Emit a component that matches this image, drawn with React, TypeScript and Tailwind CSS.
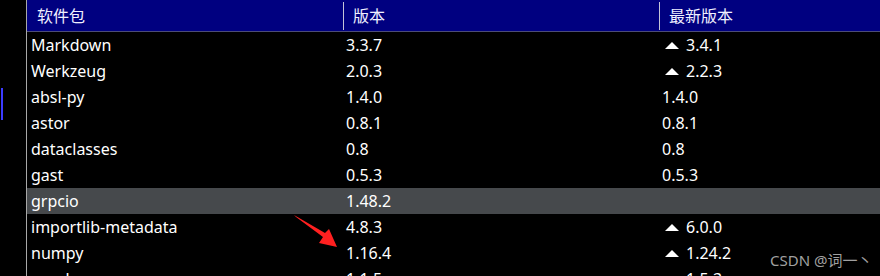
import React from 'react';

type Pkg = {
  name: string;
  version: string;
  latest: string;
  upgrade?: boolean;
};

const packages: Pkg[] = [
  { name: 'Markdown', version: '3.3.7', latest: '3.4.1', upgrade: true },
  { name: 'Werkzeug', version: '2.0.3', latest: '2.2.3', upgrade: true },
  { name: 'absl-py', version: '1.4.0', latest: '1.4.0' },
  { name: 'astor', version: '0.8.1', latest: '0.8.1' },
  { name: 'dataclasses', version: '0.8', latest: '0.8' },
  { name: 'gast', version: '0.5.3', latest: '0.5.3' },
  { name: 'grpcio', version: '1.48.2', latest: '' },
  { name: 'importlib-metadata', version: '4.8.3', latest: '6.0.0', upgrade: true },
  { name: 'numpy', version: '1.16.4', latest: '1.24.2', upgrade: true },
  { name: 'pandas', version: '1.1.5', latest: '1.5.3', upgrade: true },
];

const UpArrow = () => (
  <svg width="14" height="7" viewBox="0 0 14 7" className="shrink-0">
    <polygon points="0,7 14,7 7,0" fill="#ffffff" />
  </svg>
);

const HeaderCell = ({ label, divider }: { label: string; divider?: boolean }) => (
  <div className="flex h-full items-center">
    {divider && <div className="h-[28px] w-px bg-[#c4c4d8]" />}
    <span className={divider ? 'pl-[9px]' : 'pl-[10px]'}>{label}</span>
  </div>
);

export default function App() {
  return (
    <div
      className="relative flex h-[276px] w-[880px] overflow-hidden bg-black text-white"
      style={{ fontFamily: '"Noto Sans", "Noto Sans CJK SC", sans-serif' }}
    >
      {/* left gutter */}
      <div className="w-[26px] shrink-0">
        <div className="ml-px mt-[88px] h-[32px] w-[2px] bg-[#3c3cff]" />
      </div>

      <div className="flex-1 border-l border-[#a8a8a8] text-[16px]">
        <div className="grid h-[32px] grid-cols-[316px_316px_1fr] border-b border-[#4c4c78] bg-[#000080] text-[#f0f0ff]">
          <HeaderCell label="软件包" />
          <HeaderCell label="版本" divider />
          <HeaderCell label="最新版本" divider />
        </div>

        {packages.map((p) => (
          <div
            key={p.name}
            className={`grid h-[26px] grid-cols-[316px_316px_1fr] items-center leading-none ${
              p.name === 'grpcio' ? 'bg-[#46494c]' : ''
            }`}
          >
            <span className="pl-[4px]">{p.name}</span>
            <span className="pl-[3px]">{p.version}</span>
            {p.upgrade ? (
              <span className="flex items-center gap-[7px] pl-[6px]">
                <UpArrow />
                {p.latest}
              </span>
            ) : (
              <span className="pl-[3px]">{p.latest}</span>
            )}
          </div>
        ))}
      </div>

      {/* annotation arrow */}
      <svg className="absolute left-0 top-0" width="880" height="276">
        <polygon points="294,215 296,217 323,237 319,243 337,247 329,229 325,233" fill="#ff2020" />
      </svg>

      <span className="absolute left-[770px] top-[249px] text-[15px] text-[#a0a0a0]">CSDN @词一丶</span>
    </div>
  );
}
